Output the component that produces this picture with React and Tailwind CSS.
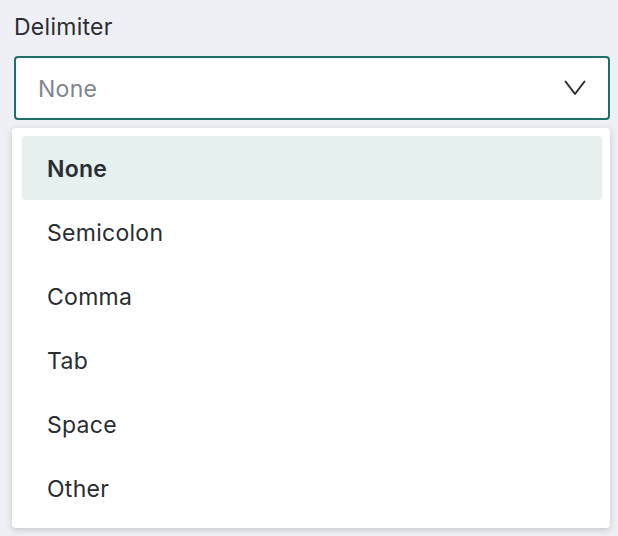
const options = ["None", "Semicolon", "Comma", "Tab", "Space", "Other"];

export default function App() {
  const selected = "None";

  return (
    <main className="min-h-[536px] w-[618px] bg-[#eff0f5] font-['Inter',sans-serif] text-[23px] tracking-[0.012em] text-[#2a2d32]">
      <div className="pl-[14px] pr-[8px] pt-[11px]">
        <label className="block leading-[32px] text-[#2a2d32]">Delimiter</label>
        <div className="mt-[13px] flex h-[64px] items-center justify-between rounded-[4px] border-2 border-[#1d6f68] bg-white pl-[22px] pr-[22px] pt-[2px]">
          <span className="text-[#7f8690]">None</span>
          <svg width="22" height="16" viewBox="0 0 22 16" fill="none" className="-mt-[2px] text-[#2a2d32]">
            <polyline points="1.5,1.5 11,14 20.5,1.5" stroke="currentColor" strokeWidth="2" strokeLinecap="round" strokeLinejoin="round" />
          </svg>
        </div>
      </div>

      <ul className="mx-[12px] mt-[8px] w-[598px] rounded-[4px] bg-white py-[8px] pl-[10px] pr-[8px] shadow-[0_2px_6px_rgba(40,45,70,0.22)]">
        {options.map((opt) => (
          <li
            key={opt}
            className={
              opt === selected
                ? "flex h-[64px] items-center rounded-[4px] bg-[#e6f0ee] pl-[25px] pt-[2px] font-semibold"
                : "flex h-[64px] items-center pl-[25px] pt-[2px]"
            }
          >
            {opt}
          </li>
        ))}
      </ul>
    </main>
  );
}
